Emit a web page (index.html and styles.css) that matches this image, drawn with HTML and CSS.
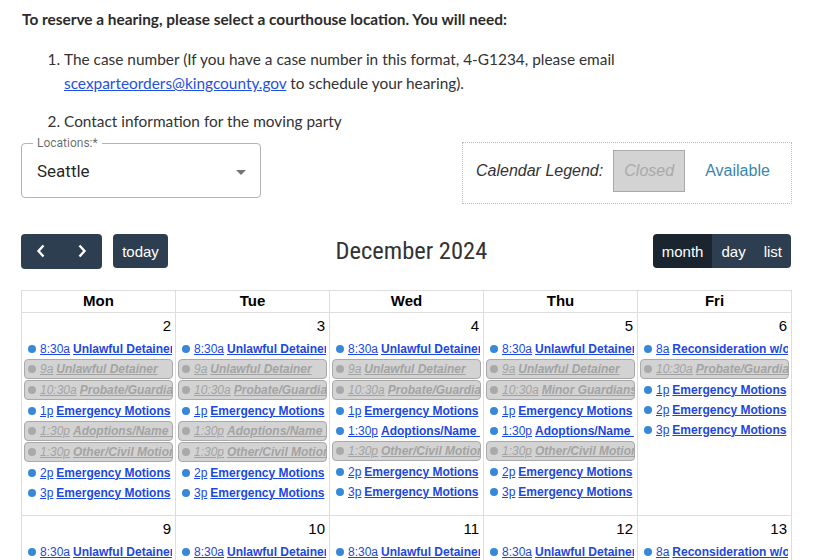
FILE: index.html
```html
<!DOCTYPE html>
<html lang="en">
<head>
<meta charset="utf-8">
<title>Reserve a hearing</title>
<link rel="stylesheet" href="styles.css">
</head>
<body>
<div class="page">
  <div class="intro">
    <p class="intro-title">To reserve a hearing, please select a courthouse location. You will need:</p>
    <ol class="steps">
      <li>The case number (If you have a case number in this format, 4-G1234, please email <a href="#" class="mail">scexparteorders@kingcounty.gov</a> to schedule your hearing).</li>
      <li>Contact information for the moving party</li>
    </ol>
  </div>

  <div class="controls">
    <div class="select">
      <span class="select-label">Locations:*</span>
      <span class="select-value">Seattle</span>
      <svg class="select-arrow" viewBox="0 0 24 24" width="24" height="24"><path d="M7 10l5 5 5-5z" fill="rgba(0,0,0,0.54)"/></svg>
    </div>
    <div class="legend">
      <span class="legend-label">Calendar Legend:</span>
      <span class="legend-closed">Closed</span>
      <span class="legend-available">Available</span>
    </div>
  </div>

  <div class="toolbar">
    <div class="tb-left">
      <div class="btn-group">
        <button class="btn btn-icon" aria-label="prev"><svg viewBox="0 0 10 14" width="10" height="14"><polyline points="7.5,1.5 2.5,7 7.5,12.5" fill="none" stroke="#fff" stroke-width="2.4"/></svg></button>
        <button class="btn btn-icon" aria-label="next"><svg viewBox="0 0 10 14" width="10" height="14"><polyline points="2.5,1.5 7.5,7 2.5,12.5" fill="none" stroke="#fff" stroke-width="2.4"/></svg></button>
      </div>
      <button class="btn btn-today">today</button>
    </div>
    <h2 class="cal-title">December 2024</h2>
    <div class="btn-group">
      <button class="btn btn-view active">month</button>
      <button class="btn btn-view">day</button>
      <button class="btn btn-view">list</button>
    </div>
  </div>

  <div class="cal">
    <div class="head">Mon</div>
    <div class="head">Tue</div>
    <div class="head">Wed</div>
    <div class="head">Thu</div>
    <div class="head">Fri</div>

    <div class="day">
      <div class="num">2</div>
      <div class="ev"><span class="dot"></span><a href="#" class="time">8:30a</a><a href="#" class="title">Unlawful Detainer</a></div>
      <div class="ev closed"><span class="dot"></span><a href="#" class="time">9a</a><a href="#" class="title">Unlawful Detainer</a></div>
      <div class="ev closed"><span class="dot"></span><a href="#" class="time">10:30a</a><a href="#" class="title">Probate/Guardianship</a></div>
      <div class="ev"><span class="dot"></span><a href="#" class="time">1p</a><a href="#" class="title">Emergency Motions</a></div>
      <div class="ev closed"><span class="dot"></span><a href="#" class="time">1:30p</a><a href="#" class="title">Adoptions/Name Changes</a></div>
      <div class="ev closed"><span class="dot"></span><a href="#" class="time">1:30p</a><a href="#" class="title">Other/Civil Motions</a></div>
      <div class="ev"><span class="dot"></span><a href="#" class="time">2p</a><a href="#" class="title">Emergency Motions</a></div>
      <div class="ev"><span class="dot"></span><a href="#" class="time">3p</a><a href="#" class="title">Emergency Motions</a></div>
    </div>
    <div class="day">
      <div class="num">3</div>
      <div class="ev"><span class="dot"></span><a href="#" class="time">8:30a</a><a href="#" class="title">Unlawful Detainer</a></div>
      <div class="ev closed"><span class="dot"></span><a href="#" class="time">9a</a><a href="#" class="title">Unlawful Detainer</a></div>
      <div class="ev closed"><span class="dot"></span><a href="#" class="time">10:30a</a><a href="#" class="title">Probate/Guardianship</a></div>
      <div class="ev"><span class="dot"></span><a href="#" class="time">1p</a><a href="#" class="title">Emergency Motions</a></div>
      <div class="ev closed"><span class="dot"></span><a href="#" class="time">1:30p</a><a href="#" class="title">Adoptions/Name Changes</a></div>
      <div class="ev closed"><span class="dot"></span><a href="#" class="time">1:30p</a><a href="#" class="title">Other/Civil Motions</a></div>
      <div class="ev"><span class="dot"></span><a href="#" class="time">2p</a><a href="#" class="title">Emergency Motions</a></div>
      <div class="ev"><span class="dot"></span><a href="#" class="time">3p</a><a href="#" class="title">Emergency Motions</a></div>
    </div>
    <div class="day">
      <div class="num">4</div>
      <div class="ev"><span class="dot"></span><a href="#" class="time">8:30a</a><a href="#" class="title">Unlawful Detainer</a></div>
      <div class="ev closed"><span class="dot"></span><a href="#" class="time">9a</a><a href="#" class="title">Unlawful Detainer</a></div>
      <div class="ev closed"><span class="dot"></span><a href="#" class="time">10:30a</a><a href="#" class="title">Probate/Guardianship</a></div>
      <div class="ev"><span class="dot"></span><a href="#" class="time">1p</a><a href="#" class="title">Emergency Motions</a></div>
      <div class="ev"><span class="dot"></span><a href="#" class="time">1:30p</a><a href="#" class="title">Adoptions/Name Changes</a></div>
      <div class="ev closed"><span class="dot"></span><a href="#" class="time">1:30p</a><a href="#" class="title">Other/Civil Motions</a></div>
      <div class="ev"><span class="dot"></span><a href="#" class="time">2p</a><a href="#" class="title">Emergency Motions</a></div>
      <div class="ev"><span class="dot"></span><a href="#" class="time">3p</a><a href="#" class="title">Emergency Motions</a></div>
    </div>
    <div class="day">
      <div class="num">5</div>
      <div class="ev"><span class="dot"></span><a href="#" class="time">8:30a</a><a href="#" class="title">Unlawful Detainer</a></div>
      <div class="ev closed"><span class="dot"></span><a href="#" class="time">9a</a><a href="#" class="title">Unlawful Detainer</a></div>
      <div class="ev closed"><span class="dot"></span><a href="#" class="time">10:30a</a><a href="#" class="title">Minor Guardianship</a></div>
      <div class="ev"><span class="dot"></span><a href="#" class="time">1p</a><a href="#" class="title">Emergency Motions</a></div>
      <div class="ev"><span class="dot"></span><a href="#" class="time">1:30p</a><a href="#" class="title">Adoptions/Name Changes</a></div>
      <div class="ev closed"><span class="dot"></span><a href="#" class="time">1:30p</a><a href="#" class="title">Other/Civil Motions</a></div>
      <div class="ev"><span class="dot"></span><a href="#" class="time">2p</a><a href="#" class="title">Emergency Motions</a></div>
      <div class="ev"><span class="dot"></span><a href="#" class="time">3p</a><a href="#" class="title">Emergency Motions</a></div>
    </div>
    <div class="day">
      <div class="num">6</div>
      <div class="ev"><span class="dot"></span><a href="#" class="time">8a</a><a href="#" class="title">Reconsideration w/o Oral Argument</a></div>
      <div class="ev closed"><span class="dot"></span><a href="#" class="time">10:30a</a><a href="#" class="title">Probate/Guardianship</a></div>
      <div class="ev"><span class="dot"></span><a href="#" class="time">1p</a><a href="#" class="title">Emergency Motions</a></div>
      <div class="ev"><span class="dot"></span><a href="#" class="time">2p</a><a href="#" class="title">Emergency Motions</a></div>
      <div class="ev"><span class="dot"></span><a href="#" class="time">3p</a><a href="#" class="title">Emergency Motions</a></div>
    </div>

    <div class="day">
      <div class="num">9</div>
      <div class="ev"><span class="dot"></span><a href="#" class="time">8:30a</a><a href="#" class="title">Unlawful Detainer</a></div>
    </div>
    <div class="day">
      <div class="num">10</div>
      <div class="ev"><span class="dot"></span><a href="#" class="time">8:30a</a><a href="#" class="title">Unlawful Detainer</a></div>
    </div>
    <div class="day">
      <div class="num">11</div>
      <div class="ev"><span class="dot"></span><a href="#" class="time">8:30a</a><a href="#" class="title">Unlawful Detainer</a></div>
    </div>
    <div class="day">
      <div class="num">12</div>
      <div class="ev"><span class="dot"></span><a href="#" class="time">8:30a</a><a href="#" class="title">Unlawful Detainer</a></div>
    </div>
    <div class="day">
      <div class="num">13</div>
      <div class="ev"><span class="dot"></span><a href="#" class="time">8a</a><a href="#" class="title">Reconsideration w/o Oral Argument</a></div>
    </div>
  </div>
</div>
</body>
</html>
```

FILE: styles.css
```css
html, body {
  margin: 0;
  padding: 0;
  background: #fff;
}

body {
  font-family: "Liberation Sans", Arial, sans-serif;
  color: #333;
}

.page {
  padding: 7px 35px 40px 21px;
}

/* Intro text */
.intro {
  font-family: Lato, "Open Sans", sans-serif;
  font-size: 15.4px;
  line-height: 24px;
  color: #333;
}

.intro-title {
  font-weight: 700;
  color: #2b2b2b;
  margin: 0 0 16px 1px;
}

.steps {
  margin: 0;
  padding-left: 43px;
}

.steps li:first-child {
  margin-bottom: 14px;
}

.mail {
  color: #1f4fe6;
  text-decoration: underline;
}

/* Controls row */
.controls {
  display: flex;
  justify-content: space-between;
  align-items: flex-start;
  margin-top: 9px;
}

.select {
  position: relative;
  box-sizing: border-box;
  width: 240px;
  height: 55px;
  margin-top: 1px;
  border: 1px solid #b4b4b4;
  border-radius: 4px;
  display: flex;
  align-items: center;
  padding-left: 15px;
  font-family: Roboto, "Liberation Sans", sans-serif;
}

.select-label {
  position: absolute;
  top: -8px;
  left: 11px;
  padding: 0 4px;
  background: #fff;
  font-size: 12px;
  line-height: 14px;
  color: rgba(0, 0, 0, 0.6);
}

.select-value {
  font-size: 17px;
  color: rgba(0, 0, 0, 0.87);
  margin-top: 1px;
}

.select-arrow {
  position: absolute;
  right: 7px;
  top: 16px;
}

.legend {
  box-sizing: border-box;
  width: 330px;
  height: 62px;
  margin-right: -1px;
  border: 1px dotted #bbb;
  display: flex;
  align-items: center;
  padding: 0 0 4px 13px;
  font-size: 16px;
}

.legend-label {
  font-style: italic;
  color: #333;
  margin-right: 10px;
}

.legend-closed {
  box-sizing: border-box;
  width: 72px;
  height: 42px;
  display: flex;
  align-items: center;
  justify-content: center;
  background: #d3d3d3;
  border: 1px solid #a9a9a9;
  color: #a9a9a9;
  font-style: italic;
  margin-right: 20px;
}

.legend-available {
  color: #3a87ad;
}

/* Toolbar */
.toolbar {
  display: flex;
  justify-content: space-between;
  align-items: center;
  margin-top: 30px;
  height: 34px;
}

.tb-left {
  display: flex;
  align-items: center;
  gap: 11px;
}

.btn-group {
  display: flex;
  border-radius: 4px;
  overflow: hidden;
}

.btn {
  box-sizing: border-box;
  height: 34px;
  border: 0;
  margin: 0;
  background: #2c3e50;
  color: #fff;
  font-family: "Liberation Sans", Arial, sans-serif;
  font-size: 15px;
  padding: 0 9px;
  display: flex;
  align-items: center;
  justify-content: center;
}

.btn-icon {
  width: 40.5px;
  height: 35px;
  padding: 0;
}

.btn-today {
  border-radius: 4px;
  width: 55px;
}

.btn-view {
  padding: 0 9px;
}

.btn-view.active {
  background: #1a252f;
}

.cal-title {
  margin: 0;
  font-family: "Liberation Sans Narrow", "Roboto Condensed", Roboto, sans-serif;
  font-weight: 400;
  font-size: 24.5px;
  line-height: 34px;
  color: #333;
  transform: translateX(1px);
}

/* Calendar grid */
.cal {
  margin-top: 22px;
  width: 771px;
  box-sizing: border-box;
  display: grid;
  grid-template-columns: repeat(5, 154px);
  grid-template-rows: 22px 203px 60px;
  border-left: 1px solid #ddd;
  border-top: 1px solid #ddd;
}

.head,
.day {
  border-right: 1px solid #ddd;
  border-bottom: 1px solid #ddd;
  min-width: 0;
  overflow: hidden;
}

.head {
  text-align: center;
  font-weight: 700;
  font-size: 15px;
  line-height: 20px;
  color: #000;
}

.num {
  text-align: right;
  padding: 4px 4px;
  font-size: 15px;
  line-height: 17px;
  color: #000;
}

.ev {
  box-sizing: border-box;
  display: flex;
  align-items: center;
  height: 19px;
  margin: 1px 2px 0;
  border: 1px solid transparent;
  border-radius: 4px;
  overflow: hidden;
  white-space: nowrap;
  font-size: 12px;
}

.ev a {
  color: #1c47e3;
  text-decoration: underline;
}

.dot {
  flex: none;
  width: 8px;
  height: 8px;
  border-radius: 50%;
  background: #3788d8;
  margin: 0 4px 0 3px;
}

.time {
  margin-right: 3px;
}

.title {
  font-weight: 700;
}

.ev.closed {
  height: 20px;
  background: #d3d3d3;
  border-color: #a9a9a9;
  font-style: italic;
}

.ev.closed a {
  color: #a3a3a3;
}

.ev.closed .dot {
  background: #a9a9a9;
}
```
